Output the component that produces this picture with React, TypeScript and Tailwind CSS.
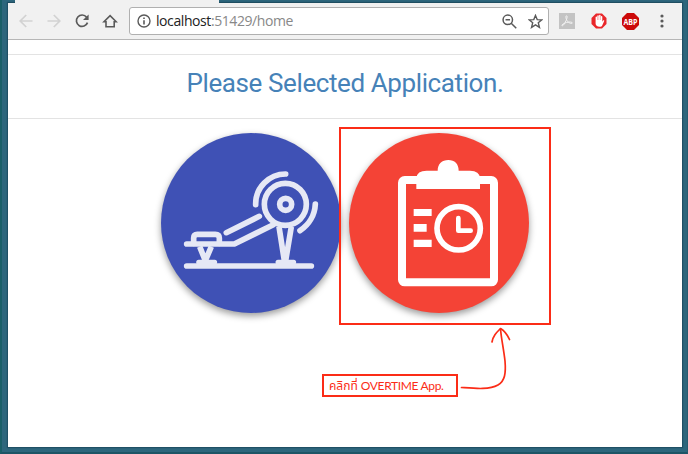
import React from "react";

function BackForward({ flip }: { flip?: boolean }) {
  return (
    <svg
      className={flip ? "h-4 w-4 -scale-x-100" : "h-4 w-4"}
      viewBox="0 0 16 16"
      fill="none"
      stroke="#d2d2d2"
      strokeWidth="1.7"
    >
      <path d="M14.5 8H2.5M8.2 2L2.2 8l6 6" />
    </svg>
  );
}

function Toolbar() {
  return (
    <div className="flex h-[37px] shrink-0 items-center border-b border-[#b6b6b6] bg-[#f1f1f1]">
      <div className="ml-[10px] flex items-center">
        <BackForward />
        <div className="ml-[12px] flex">
          <BackForward flip />
        </div>
        <svg className="ml-[12px] h-4 w-4" viewBox="0 0 16 16" fill="none" stroke="#5a5a5a" strokeWidth="1.7">
          <path d="M12.6 4.2A5.7 5.7 0 1 0 13.5 9.6" />
          <path d="M14.6 1.4v5.6H9z" fill="#5a5a5a" stroke="none" />
        </svg>
        <svg className="ml-[12px] h-4 w-4" viewBox="0 0 16 16" fill="none" stroke="#5a5a5a" strokeWidth="1.6">
          <path d="M2 8.8H4V13.7H12.2V8.8H14.2L8.1 2.6z" />
        </svg>
      </div>
      <div className="ml-[11px] flex h-7 w-[420px] items-center rounded-[3px] border border-[#b0b0b0] bg-white">
        <svg className="ml-[7px] h-[14px] w-[14px]" viewBox="0 0 14 14" fill="none" stroke="#5a5a5a">
          <circle cx="7" cy="7" r="6" strokeWidth="1.4" />
          <path d="M7 6.2v4.2M7 3.5v1.5" strokeWidth="1.6" />
        </svg>
        <span className="ml-[5px] font-['Open_Sans','Noto_Sans',sans-serif] text-[14px] leading-none tracking-[-0.42px] text-[#888]">
          <span className="text-[#222]">localhost</span>:51429/home
        </span>
        <svg className="mr-[11px] ml-auto h-[15px] w-[15px]" viewBox="0 0 14 14" fill="none" stroke="#5a5a5a" strokeWidth="1.4">
          <circle cx="5.4" cy="5.4" r="4.4" />
          <path d="M8.6 8.6L13.3 13.3M3.3 5.4h4.2" />
        </svg>
        <svg className="mr-[5px] h-[15px] w-[15px]" viewBox="0 0 14 14" fill="none" stroke="#5a5a5a" strokeWidth="1.3">
          <path d="M7 1.3l1.6 3.9 4.3.3-3.3 2.7 1.1 4.3L7 10.2l-3.7 2.3 1.1-4.3L1.1 5.5l4.3-.3z" />
        </svg>
      </div>
      <svg className="ml-[10px] h-4 w-4" viewBox="0 0 16 16">
        <path d="M0 0h16v16H0z" fill="#c3c3c3" />
        <path
          d="M7.4 2.8c1.4 0 .5 2.8-.3 4.7-.9 2-2.6 5.2-3.8 5.3-1.6-.2 1.4-2.8 4.6-3.4 2.8-.6 5.4-.5 5.4.6 0 1.1-3 .3-4.6-1.5C7 6.8 6.3 2.9 7.4 2.8z"
          fill="none"
          stroke="#f3f3f3"
          strokeWidth="1"
        />
      </svg>
      <svg className="ml-[16px] h-4 w-4" viewBox="0 0 16 16">
        <path d="M5 .5h6L15.5 5v6L11 15.5H5L.5 11V5z" fill="#e9262a" />
        <path
          d="M4.6 8.5V4.2a.7.7 0 0 1 1.4 0V7h.3V2.9a.75.75 0 0 1 1.5 0V7h.3V2.5a.75.75 0 0 1 1.5 0V7h.3V3.7a.7.7 0 0 1 1.4 0v5.1l.8-1.2c.6-.6 1.4-.2 1.1.5l-2 4.3c-.5 1-1.3 1.4-2.6 1.4-2.6 0-4-1.5-4-3.3z"
          fill="#fff"
        />
      </svg>
      <svg className="ml-[15px] h-[17px] w-[17px] overflow-visible" viewBox="0 0 17 17">
        <path d="M5 0h7l5 5v7l-5 5H5l-5-5V5z" fill="#cc0a0a" />
        <text x="8.5" y="11.5" textAnchor="middle" textLength="14" lengthAdjust="spacingAndGlyphs" className="fill-white font-['Open_Sans',sans-serif] text-[8px] font-bold">
          ABP
        </text>
      </svg>
      <svg className="ml-[18px] h-4 w-[10px]" viewBox="0 0 10 16" fill="#5a5a5a">
        <circle cx="5" cy="3" r="1.6" />
        <circle cx="5" cy="8" r="1.6" />
        <circle cx="5" cy="13" r="1.6" />
      </svg>
    </div>
  );
}

function RowingMachine() {
  return (
    <svg
      className="h-[180px] w-[180px]"
      viewBox="33 24 540 540"
      fill="none"
      stroke="#e6e8f5"
      strokeWidth="17"
      strokeLinecap="round"
      strokeLinejoin="round"
    >
      <path d="M110 423H484" />
      <path d="M110 357H253L370 299" />
      <path d="M131 355V339Q131 328 142 328H196Q208 328 208 339V355" />
      <path d="M229 323L328 274" />
      <path d="M149 365L166 407L184 365" strokeLinecap="butt" />
      <path d="M146 412H194M384 412H431" strokeWidth="15" />
      <path d="M387 305L403 407M424 305L407 407" strokeLinecap="butt" />
      <circle cx="406" cy="238" r="63" />
      <circle cx="407" cy="238" r="18" />
      <path d="M317 239A90 90 0 0 1 407 147" />
      <path d="M496 237A101 101 0 0 1 450 317" />
    </svg>
  );
}

function ClipboardClock() {
  return (
    <svg className="h-[180px] w-[180px]" viewBox="39 33 540 540" fill="#fff">
      <rect x="198" y="174" width="276" height="307" rx="8" fill="none" stroke="#fff" strokeWidth="24" />
      <path d="M241 201V168Q243 146 272 146H305C305 126 318 114 337 114S368 126 368 146H402Q431 147 432 168V201Z" />
      <path d="M233 261H287V282H233zM233 306H272V329H233zM233 353H287V375H233z" />
      <circle cx="368" cy="319" r="65" fill="none" stroke="#fff" strokeWidth="17" />
      <path d="M367 288V326H404" fill="none" stroke="#fff" strokeWidth="14" strokeLinecap="round" strokeLinejoin="round" />
    </svg>
  );
}

export default function App() {
  return (
    <div className="relative flex h-[454px] w-[688px] flex-col overflow-hidden border-r border-b-2 border-l-2 border-r-[#285c70] border-b-[#1d5566] border-l-[#1a5f68] bg-[#2d667c] pr-[5px] pb-[5px] pl-[6px]">
      <div className="relative z-10 flex h-[3px] shrink-0">
        <div className="w-[7px] border-b border-[#1f4e61]" />
        <div className="h-[3px] w-[204px] shrink-0 bg-[#f1f1f1]" />
        <div className="flex-1 border-b border-[#1f4e61]" />
      </div>
      <main className="flex flex-1 flex-col bg-white shadow-[0_0_1px_1px_#1f5065]">
        <Toolbar />
        <div className="mt-[14px] flex h-[65px] items-center justify-center border-y border-[#e3e3e3] pb-2">
          <h1 className="font-[Roboto,sans-serif] text-[26px] leading-none tracking-[-0.4px] whitespace-nowrap text-[#4682b8]">
            Please Selected Application.
          </h1>
        </div>
        <div className="mt-[14px] ml-[153px] flex gap-2">
          <button className="h-[180px] w-[180px] rounded-full bg-[#3f51b5] shadow-[0_3px_7px_rgba(0,0,0,0.4)]">
            <RowingMachine />
          </button>
          <button className="h-[180px] w-[180px] rounded-full bg-[#f44336] shadow-[0_3px_7px_rgba(0,0,0,0.4)]">
            <ClipboardClock />
          </button>
        </div>
      </main>
      {/* Annotations over the page */}
      <div className="absolute top-[127px] left-[337px] h-[198px] w-[212px] border-2 border-[#fb2c17]" />
      <div className="absolute top-[374px] left-[320px] flex h-[23px] w-[136px] items-center border-2 border-[#fb2c17] pl-[5px] font-[Lato,'Open_Sans','Noto_Sans_Thai',sans-serif] text-[12px] leading-none whitespace-pre text-[#fb2c17]">
        <span>
          คลิกที่ <span className="tracking-[-0.35px]">OVERTIME App.</span>
        </span>
      </div>
      <svg
        className="absolute top-[320px] left-[448px] h-[80px] w-[70px]"
        viewBox="450 320 70 80"
        fill="none"
        stroke="#fb2c17"
        strokeWidth="1.7"
        strokeLinecap="round"
        strokeLinejoin="round"
      >
        <path d="M461.5 387.5C475 388.5 489 390 498 385C505 381 506 373 505 361C503.5 348 501.5 340 500.5 329" />
        <path d="M492 342C493 336 496 333 500.5 328.5C504 330.5 507 334 509.5 339.5" />
      </svg>
    </div>
  );
}
